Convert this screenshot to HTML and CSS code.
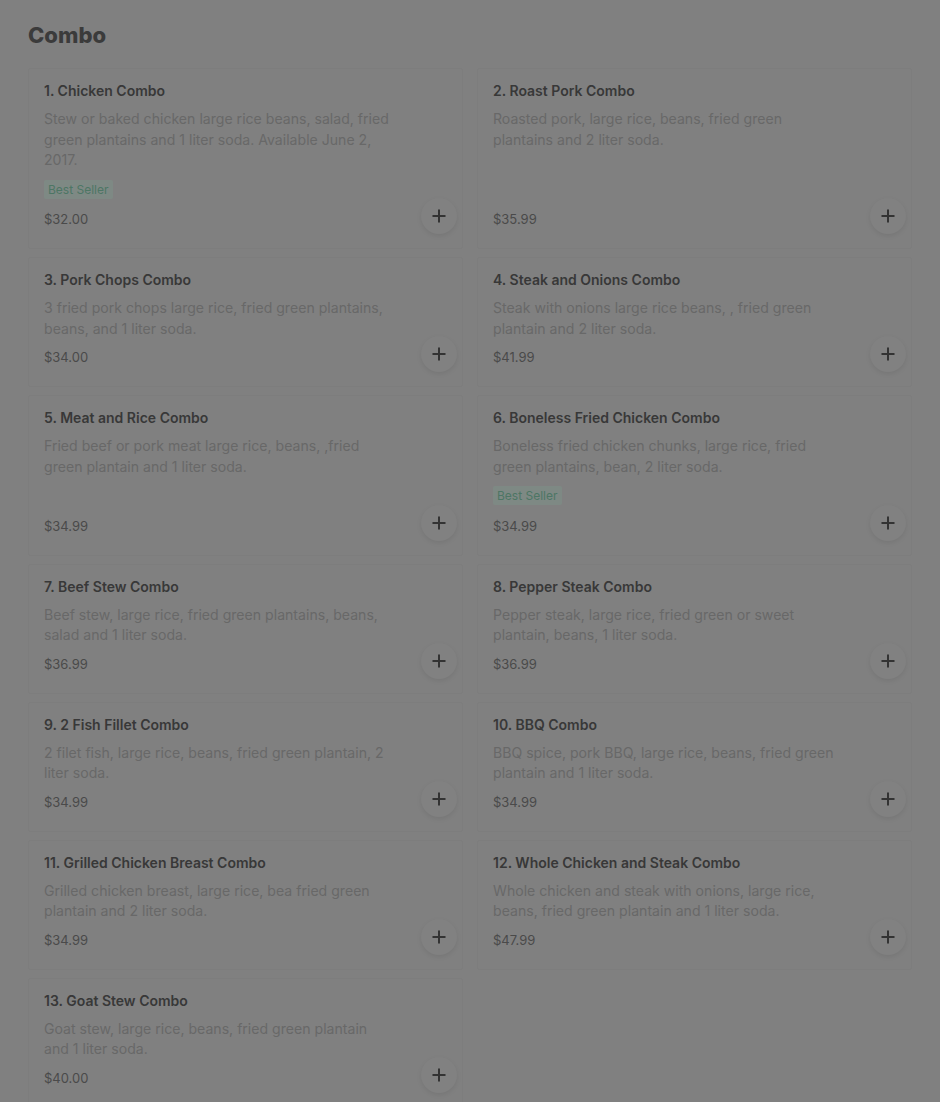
FILE: index.html
```html
<!DOCTYPE html>
<html lang="en">
<head>
<meta charset="utf-8">
<title>Combo</title>
<link rel="stylesheet" href="styles.css">
</head>
<body>
<main class="page">
  <h2 class="section-title">Combo</h2>
  <div class="grid">
    <div class="card">
      <div class="info">
        <div class="body">
          <h3 class="name">1. Chicken Combo</h3>
          <p class="desc">Stew or baked chicken large rice beans, salad, fried green plantains and 1 liter soda. Available June 2, 2017.</p>
          <span class="badge">Best Seller</span>
        </div>
        <div class="price">$32.00</div>
      </div>
      <button class="add" aria-label="Add"><svg viewBox="0 0 16 16" width="16" height="16"><path d="M8 1.5v13M1.5 8h13" stroke="currentColor" stroke-width="2" fill="none"/></svg></button>
    </div>
    <div class="card">
      <div class="info">
        <div class="body">
          <h3 class="name">2. Roast Pork Combo</h3>
          <p class="desc">Roasted pork, large rice, beans, fried green plantains and 2 liter soda.</p>
        </div>
        <div class="price">$35.99</div>
      </div>
      <button class="add" aria-label="Add"><svg viewBox="0 0 16 16" width="16" height="16"><path d="M8 1.5v13M1.5 8h13" stroke="currentColor" stroke-width="2" fill="none"/></svg></button>
    </div>
    <div class="card">
      <div class="info">
        <div class="body">
          <h3 class="name">3. Pork Chops Combo</h3>
          <p class="desc">3 fried pork chops large rice, fried green plantains, beans, and 1 liter soda.</p>
        </div>
        <div class="price">$34.00</div>
      </div>
      <button class="add" aria-label="Add"><svg viewBox="0 0 16 16" width="16" height="16"><path d="M8 1.5v13M1.5 8h13" stroke="currentColor" stroke-width="2" fill="none"/></svg></button>
    </div>
    <div class="card">
      <div class="info">
        <div class="body">
          <h3 class="name">4. Steak and Onions Combo</h3>
          <p class="desc">Steak with onions large rice beans, , fried green plantain and 2 liter soda.</p>
        </div>
        <div class="price">$41.99</div>
      </div>
      <button class="add" aria-label="Add"><svg viewBox="0 0 16 16" width="16" height="16"><path d="M8 1.5v13M1.5 8h13" stroke="currentColor" stroke-width="2" fill="none"/></svg></button>
    </div>
    <div class="card">
      <div class="info">
        <div class="body">
          <h3 class="name">5. Meat and Rice Combo</h3>
          <p class="desc">Fried beef or pork meat large rice, beans, ,fried green plantain and 1 liter soda.</p>
        </div>
        <div class="price">$34.99</div>
      </div>
      <button class="add" aria-label="Add"><svg viewBox="0 0 16 16" width="16" height="16"><path d="M8 1.5v13M1.5 8h13" stroke="currentColor" stroke-width="2" fill="none"/></svg></button>
    </div>
    <div class="card">
      <div class="info">
        <div class="body">
          <h3 class="name">6. Boneless Fried Chicken Combo</h3>
          <p class="desc">Boneless fried chicken chunks, large rice, fried green plantains, bean, 2 liter soda.</p>
          <span class="badge">Best Seller</span>
        </div>
        <div class="price">$34.99</div>
      </div>
      <button class="add" aria-label="Add"><svg viewBox="0 0 16 16" width="16" height="16"><path d="M8 1.5v13M1.5 8h13" stroke="currentColor" stroke-width="2" fill="none"/></svg></button>
    </div>
    <div class="card">
      <div class="info">
        <div class="body">
          <h3 class="name">7. Beef Stew Combo</h3>
          <p class="desc">Beef stew, large rice, fried green plantains, beans, salad and 1 liter soda.</p>
        </div>
        <div class="price">$36.99</div>
      </div>
      <button class="add" aria-label="Add"><svg viewBox="0 0 16 16" width="16" height="16"><path d="M8 1.5v13M1.5 8h13" stroke="currentColor" stroke-width="2" fill="none"/></svg></button>
    </div>
    <div class="card">
      <div class="info">
        <div class="body">
          <h3 class="name">8. Pepper Steak Combo</h3>
          <p class="desc">Pepper steak, large rice, fried green or sweet plantain, beans, 1 liter soda.</p>
        </div>
        <div class="price">$36.99</div>
      </div>
      <button class="add" aria-label="Add"><svg viewBox="0 0 16 16" width="16" height="16"><path d="M8 1.5v13M1.5 8h13" stroke="currentColor" stroke-width="2" fill="none"/></svg></button>
    </div>
    <div class="card">
      <div class="info">
        <div class="body">
          <h3 class="name">9. 2 Fish Fillet Combo</h3>
          <p class="desc">2 filet fish, large rice, beans, fried green plantain, 2 liter soda.</p>
        </div>
        <div class="price">$34.99</div>
      </div>
      <button class="add" aria-label="Add"><svg viewBox="0 0 16 16" width="16" height="16"><path d="M8 1.5v13M1.5 8h13" stroke="currentColor" stroke-width="2" fill="none"/></svg></button>
    </div>
    <div class="card">
      <div class="info">
        <div class="body">
          <h3 class="name">10. BBQ Combo</h3>
          <p class="desc">BBQ spice, pork BBQ, large rice, beans, fried green plantain and 1 liter soda.</p>
        </div>
        <div class="price">$34.99</div>
      </div>
      <button class="add" aria-label="Add"><svg viewBox="0 0 16 16" width="16" height="16"><path d="M8 1.5v13M1.5 8h13" stroke="currentColor" stroke-width="2" fill="none"/></svg></button>
    </div>
    <div class="card">
      <div class="info">
        <div class="body">
          <h3 class="name">11. Grilled Chicken Breast Combo</h3>
          <p class="desc">Grilled chicken breast, large rice, bea fried green plantain and 2 liter soda.</p>
        </div>
        <div class="price">$34.99</div>
      </div>
      <button class="add" aria-label="Add"><svg viewBox="0 0 16 16" width="16" height="16"><path d="M8 1.5v13M1.5 8h13" stroke="currentColor" stroke-width="2" fill="none"/></svg></button>
    </div>
    <div class="card">
      <div class="info">
        <div class="body">
          <h3 class="name">12. Whole Chicken and Steak Combo</h3>
          <p class="desc">Whole chicken and steak with onions, large rice, beans, fried green plantain and 1 liter soda.</p>
        </div>
        <div class="price">$47.99</div>
      </div>
      <button class="add" aria-label="Add"><svg viewBox="0 0 16 16" width="16" height="16"><path d="M8 1.5v13M1.5 8h13" stroke="currentColor" stroke-width="2" fill="none"/></svg></button>
    </div>
    <div class="card">
      <div class="info">
        <div class="body">
          <h3 class="name">13. Goat Stew Combo</h3>
          <p class="desc">Goat stew, large rice, beans, fried green plantain and 1 liter soda.</p>
        </div>
        <div class="price">$40.00</div>
      </div>
      <button class="add" aria-label="Add"><svg viewBox="0 0 16 16" width="16" height="16"><path d="M8 1.5v13M1.5 8h13" stroke="currentColor" stroke-width="2" fill="none"/></svg></button>
    </div>
  </div>
</main>
</body>
</html>
```
FILE: styles.css
```css
* { box-sizing: border-box; }
html, body { margin: 0; padding: 0; }
body {
  background: #808080;
  font-family: Inter, "Noto Sans", sans-serif;
  color: #3a3a3a;
}
.page {
  padding: 21px 28px 0;
}
.section-title {
  margin: 0 0 19px;
  font-size: 22px;
  line-height: 28px;
  font-weight: 800;
  color: #3b3b3b;
}
.grid {
  display: grid;
  grid-template-columns: 1fr 1fr;
  column-gap: 14px;
  row-gap: 8px;
}
.card {
  display: flex;
  padding: 13px 5px 12px 15px;
  border: 1px solid rgba(0,0,0,0.025);
  border-radius: 2px;
}
.info {
  flex: 1;
  display: flex;
  flex-direction: column;
  padding-bottom: 8px;
  min-width: 0;
}
.body {
  flex: 1;
  display: flex;
  flex-direction: column;
  align-items: flex-start;
}
.name {
  margin: 0;
  font-size: 14px;
  line-height: 18px;
  font-weight: 600;
  color: #383838;
}
.desc {
  margin: 9px 0 0;
  max-width: 348px;
  font-size: 14.1px;
  line-height: 20.5px;
  font-weight: 400;
  color: #686868;
}
.badge {
  margin: 9px 0 2.5px;
  padding: 0 4px;
  height: 19px;
  line-height: 19px;
  font-size: 12px;
  color: #4d7664;
  background: #7e8984;
  border-radius: 2px;
}
.price {
  margin-top: 9px;
  font-size: 13px;
  line-height: 18px;
  color: #4a4a4a;
}
.add {
  align-self: flex-end;
  flex: none;
  width: 36px;
  height: 36px;
  margin-bottom: 2px;
  border: none;
  border-radius: 50%;
  background: #818181;
  color: #333333;
  display: flex;
  align-items: center;
  justify-content: center;
  padding: 0;
  box-shadow: 0 2px 5px rgba(0,0,0,0.08);
}
.add svg { display: block; }
```
